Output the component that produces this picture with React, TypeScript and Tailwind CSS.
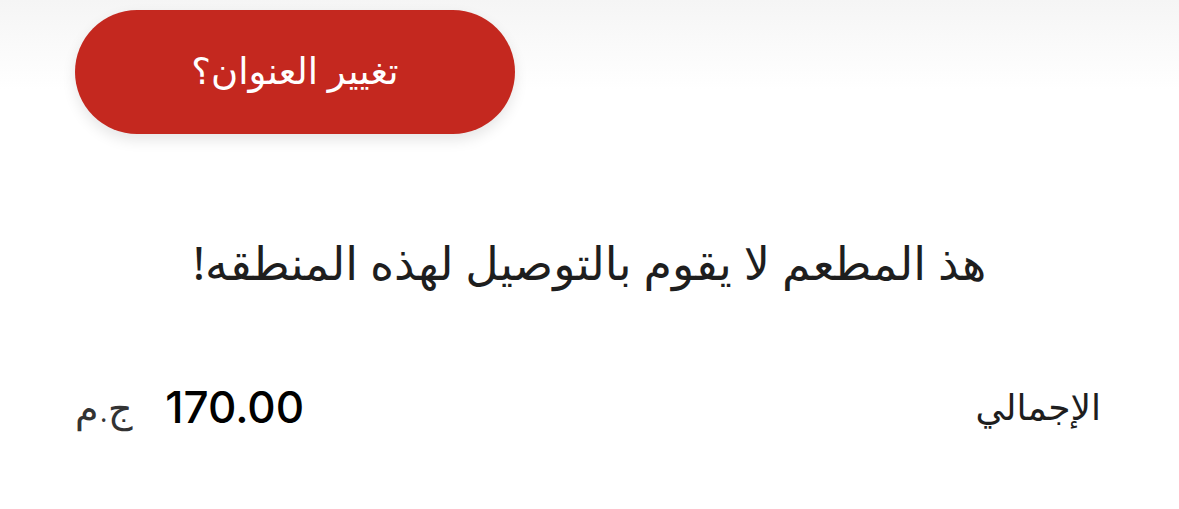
import React from 'react';

const arabic = { fontFamily: '"Noto Sans", "DejaVu Sans", sans-serif' };

export default function App() {
    return (
        <div dir="rtl" className="w-[1179px] h-[509px] overflow-hidden bg-[linear-gradient(to_bottom,#f5f5f5_0px,#ffffff_90px)]" style={arabic}>
            <div className="flex justify-end pl-[75px] pt-[10px]">
                <button className="w-[440px] h-[124px] rounded-full bg-[#c4281f] text-white text-[37px] leading-none pb-[6px] flex items-center justify-center shadow-[0_6px_14px_rgba(0,0,0,0.10)]">
                    تغيير العنوان؟
                </button>
            </div>

            <p className="mt-[105px] text-center text-[46px] text-[#1e1e1e] leading-none">
                هذ المطعم لا يقوم بالتوصيل لهذه المنطقه!
            </p>

            <div className="mt-[100px] flex items-center justify-between pr-[78px] pl-[75px] leading-none">
                <span className="text-[36px] font-medium text-[#1e1e1e]">الإجمالي</span>
                <div className="flex items-center gap-[32px]">
                    <span className="text-[44px] font-medium text-black" style={{ fontFamily: 'Inter, sans-serif' }}>170.00</span>
                    <span className="text-[38px] font-light text-[#333]">ج.م</span>
                </div>
            </div>
        </div>
    );
}
